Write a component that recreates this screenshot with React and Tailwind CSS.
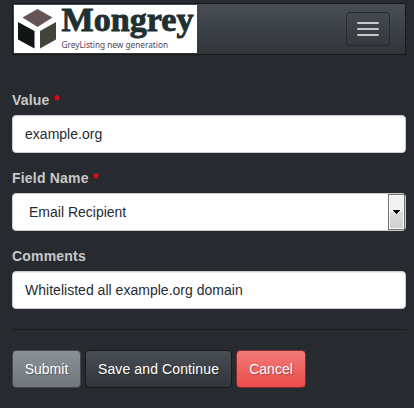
import React from "react";

function Logo() {
  return (
    <svg className="block overflow-visible bg-white" width="183" height="48" viewBox="14 5 183 48" role="img">
      <polygon points="37.5,9 52.5,17.5 37.5,27 22.5,17.5" fill="#665353" />
      <polygon points="18,22 34.5,31 34.5,48.5 18,39.5" fill="#111513" />
      <polygon points="56,22 40,31 40,48.5 56,39.5" fill="#43443a" />
      <text
        x="61.5"
        y="31"
        textLength="132"
        lengthAdjust="spacingAndGlyphs"
        fontSize="34.5"
        fontWeight="700"
        fill="#1f3030"
        stroke="#1f3030"
        strokeWidth="0.9"
        className="font-['Liberation_Serif',serif]"
      >
        Mongrey
      </text>
      <text
        x="61.5"
        y="48"
        textLength="106.5"
        lengthAdjust="spacingAndGlyphs"
        fontSize="8.8"
        fill="#48445e"
        className="font-['Noto_Sans',sans-serif]"
      >
        GreyListing new generation
      </text>
    </svg>
  );
}

function Navbar() {
  return (
    <nav className="flex h-[52px] items-start justify-between border border-[#17191b] bg-linear-to-b from-[#484e55] via-[#3a3f44] via-60% to-[#313539] pt-px pr-[15px] pl-px">
      <Logo />
      <button className="mt-[7px] flex h-[34px] w-[44px] flex-col items-center justify-center gap-1 rounded border border-[#272b2f]">
        <span className="h-0.5 w-[22px] rounded-[1px] bg-[#c8c8c8]" />
        <span className="h-0.5 w-[22px] rounded-[1px] bg-[#c8c8c8]" />
        <span className="h-0.5 w-[22px] rounded-[1px] bg-[#c8c8c8]" />
      </button>
    </nav>
  );
}

function Field({ label, required, children }) {
  return (
    <div className="mb-[15px]">
      <label className="mb-[5px] block h-5 font-bold tracking-[0.2px] text-[#c8c8c8]">
        {label}
        {required && <span className="text-[#f00]"> *</span>}
      </label>
      {children}
    </div>
  );
}

const inputClass =
  "block h-[38px] w-full rounded border border-[#cccccc] bg-white px-3 tracking-[0.02px] text-[#272b30] shadow-[inset_0_1px_1px_rgba(0,0,0,0.075)] outline-none";

const buttonClass =
  "h-[38px] rounded border text-center whitespace-nowrap text-white [text-shadow:1px_1px_1px_rgba(0,0,0,0.3)]";

export default function App() {
  return (
    <div className="h-[408px] w-[414px] overflow-hidden bg-[#272b30] pt-[3px] pr-2 pl-3 font-['Liberation_Sans',Arial,sans-serif] text-[14px] leading-5">
      <Navbar />
      <form className="pt-[35px]">
        <Field label="Value" required>
          <input className={inputClass} defaultValue="example.org" />
        </Field>
        <Field label="Field Name" required>
          <div className="flex h-[38px] items-center justify-between rounded border border-[#cccccc] bg-white pl-4 text-[#272b30]">
            <span>Email Recipient</span>
            <span className="flex h-9 w-[17px] items-center justify-center border border-[#707070] bg-linear-to-b from-[#f2f2f2] from-50% via-[#dddddd] via-50% to-[#cfcfcf] shadow-[inset_0_0_0_1px_#fafafa]">
              <svg width="7" height="4" viewBox="0 0 7 4" shapeRendering="crispEdges">
                <path d="M0 0H7V1H6V2H5V3H4V4H3V3H2V2H1V1H0Z" fill="#000" />
              </svg>
            </span>
          </div>
        </Field>
        <Field label="Comments">
          <input className={inputClass} defaultValue="Whitelisted all example.org domain" />
        </Field>
        <hr className="mt-5 mb-5 border-t border-[#1c1e22]" />
        <div className="flex gap-1">
          <button type="button" className={`${buttonClass} w-[69px] border-[#44494e] bg-linear-to-b from-[#8a9196] via-[#7a8288] via-60% to-[#70787d]`}>
            Submit
          </button>
          <button type="button" className={`${buttonClass} w-[147px] border-[#17191b] bg-linear-to-b from-[#484e55] via-[#3a3f44] via-60% to-[#313539] tracking-[0.12px]`}>
            Save and Continue
          </button>
          <button type="button" className={`${buttonClass} w-[70px] border-[#7c2e2e] bg-linear-to-b from-[#f17a77] via-[#ee5f5b] via-60% to-[#ec4d49]`}>
            Cancel
          </button>
        </div>
      </form>
    </div>
  );
}
